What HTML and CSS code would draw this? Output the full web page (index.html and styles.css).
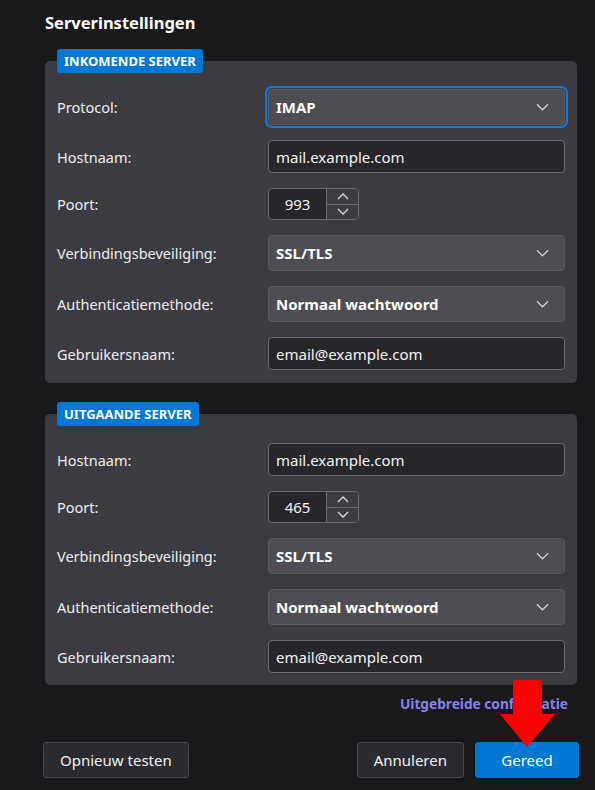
FILE: index.html
```html
<!DOCTYPE html>
<html lang="nl">
<head>
<meta charset="utf-8">
<title>Serverinstellingen</title>
<link rel="stylesheet" href="styles.css">
</head>
<body>
<div class="page">
  <h1 class="title">Serverinstellingen</h1>

  <section class="group">
    <span class="badge">INKOMENDE SERVER</span>
    <div class="rows">
      <span class="lbl">Protocol:</span>
      <div class="select focus"><span>IMAP</span><svg class="chev" viewBox="0 0 14 8"><path d="M1 1 L7 7 L13 1"/></svg></div>

      <span class="lbl">Hostnaam:</span>
      <div class="input">mail.example.com</div>

      <span class="lbl">Poort:</span>
      <div class="number"><span class="num">993</span><span class="spin"><span class="up"><svg viewBox="0 0 12 7"><path d="M1 6 L6 1 L11 6"/></svg></span><span class="down"><svg viewBox="0 0 12 7"><path d="M1 1 L6 6 L11 1"/></svg></span></span></div>

      <span class="lbl">Verbindingsbeveiliging:</span>
      <div class="select"><span>SSL/TLS</span><svg class="chev" viewBox="0 0 14 8"><path d="M1 1 L7 7 L13 1"/></svg></div>

      <span class="lbl">Authenticatiemethode:</span>
      <div class="select"><span>Normaal wachtwoord</span><svg class="chev" viewBox="0 0 14 8"><path d="M1 1 L7 7 L13 1"/></svg></div>

      <span class="lbl">Gebruikersnaam:</span>
      <div class="input">email@example.com</div>
    </div>
  </section>

  <section class="group second">
    <span class="badge">UITGAANDE SERVER</span>
    <div class="rows">
      <span class="lbl">Hostnaam:</span>
      <div class="input">mail.example.com</div>

      <span class="lbl">Poort:</span>
      <div class="number"><span class="num">465</span><span class="spin"><span class="up"><svg viewBox="0 0 12 7"><path d="M1 6 L6 1 L11 6"/></svg></span><span class="down"><svg viewBox="0 0 12 7"><path d="M1 1 L6 6 L11 1"/></svg></span></span></div>

      <span class="lbl">Verbindingsbeveiliging:</span>
      <div class="select"><span>SSL/TLS</span><svg class="chev" viewBox="0 0 14 8"><path d="M1 1 L7 7 L13 1"/></svg></div>

      <span class="lbl">Authenticatiemethode:</span>
      <div class="select"><span>Normaal wachtwoord</span><svg class="chev" viewBox="0 0 14 8"><path d="M1 1 L7 7 L13 1"/></svg></div>

      <span class="lbl">Gebruikersnaam:</span>
      <div class="input">email@example.com</div>
    </div>
  </section>

  <div class="link-row"><a class="link">Uitgebreide configuratie</a></div>

  <div class="actions">
    <button class="btn">Opnieuw testen</button>
    <span class="spacer"></span>
    <button class="btn">Annuleren</button>
    <button class="btn primary">Gereed</button>
  </div>

  <svg class="arrow" viewBox="0 0 56 68"><polygon points="13,0 42,0 42,34 55,34 27,67 0,34 13,34"/></svg>
</div>
</body>
</html>
```

FILE: styles.css
```css
* { box-sizing: border-box; }
html, body { margin: 0; padding: 0; background: #19191c; }
body {
  font-family: "Noto Sans", "Open Sans", sans-serif;
  color: #f2f2f2;
  width: 595px;
  height: 790px;
  overflow: hidden;
}
.page {
  position: relative;
  width: 595px;
  height: 790px;
  padding: 13px 18px 0 45px;
}
.title {
  margin: 0 0 28px 0;
  font-size: 16.5px;
  line-height: 20px;
  font-weight: 700;
  color: #ffffff;
}
.group {
  position: relative;
  width: 532px;
  background: #3c3b41;
  border-radius: 5px;
  padding: 28px 12px 13px 12px;
}
.group.second {
  margin-top: 31px;
  padding-top: 29px;
  padding-bottom: 12px;
}
.badge {
  position: absolute;
  top: -12px;
  left: 12px;
  height: 24px;
  line-height: 24px;
  padding: 0 7px;
  background: #0078d4;
  color: #ffffff;
  font-size: 13px;
  font-weight: 700;
  border-radius: 3px;
}
.rows {
  display: grid;
  grid-template-columns: 211px 297px;
  row-gap: 15px;
  align-items: center;
}
.lbl {
  font-size: 14.5px;
  line-height: 20px;
  color: #eeeeee;
}
.select {
  height: 36px;
  background: #4e4d53;
  border: 1px solid #5a5960;
  border-radius: 4px;
  display: flex;
  align-items: center;
  justify-content: space-between;
  padding: 0 15px 0 7px;
  font-size: 15px;
  font-weight: 700;
  color: #ffffff;
}
.select.focus {
  outline: 2px solid #0f7bd8;
  outline-offset: 1px;
}
.chev {
  width: 13px;
  height: 8px;
  fill: none;
  stroke: #d6d6d6;
  stroke-width: 1.3;
}
.input {
  height: 33px;
  background: #27262b;
  border: 1px solid #6c6b71;
  border-radius: 4px;
  display: flex;
  align-items: center;
  padding: 0 7px;
  font-size: 15px;
  color: #f4f4f4;
}
.number {
  width: 91px;
  height: 32px;
  display: flex;
  border: 1px solid #6c6b71;
  border-radius: 4px;
  overflow: hidden;
  background: #27262b;
}
.num {
  width: 57px;
  display: flex;
  align-items: center;
  justify-content: center;
  font-size: 15px;
  color: #f4f4f4;
}
.spin {
  flex: 1;
  display: flex;
  flex-direction: column;
  border-left: 1px solid #6c6b71;
  background: #3e3d43;
}
.spin .up, .spin .down {
  flex: 1;
  display: flex;
  align-items: center;
  justify-content: center;
}
.spin .up { border-bottom: 1px solid #6c6b71; }
.spin svg {
  width: 12px;
  height: 7px;
  fill: none;
  stroke: #dcdcdc;
  stroke-width: 1.3;
}
.link-row {
  width: 532px;
  display: flex;
  justify-content: flex-end;
  padding-right: 9px;
  margin-top: 9px;
}
.link {
  font-size: 13.7px;
  line-height: 20px;
  font-weight: 700;
  color: #8a80ec;
}
.actions {
  width: 536px;
  margin-left: -2px;
  margin-top: 28px;
  display: flex;
  gap: 11px;
}
.spacer { flex: 1; }
.btn {
  height: 36px;
  padding: 0 16px;
  font-family: "Noto Sans", "Open Sans", sans-serif;
  font-size: 15px;
  color: #f2f2f2;
  background: #2b2a2f;
  border: 1px solid #4b4a50;
  border-radius: 3px;
}
.btn.primary {
  width: 104px;
  background: #0078d4;
  border-color: #0078d4;
  color: #ffffff;
}
.arrow {
  position: absolute;
  left: 500px;
  top: 680px;
  width: 56px;
  height: 68px;
  fill: #ff0000;
}
```
